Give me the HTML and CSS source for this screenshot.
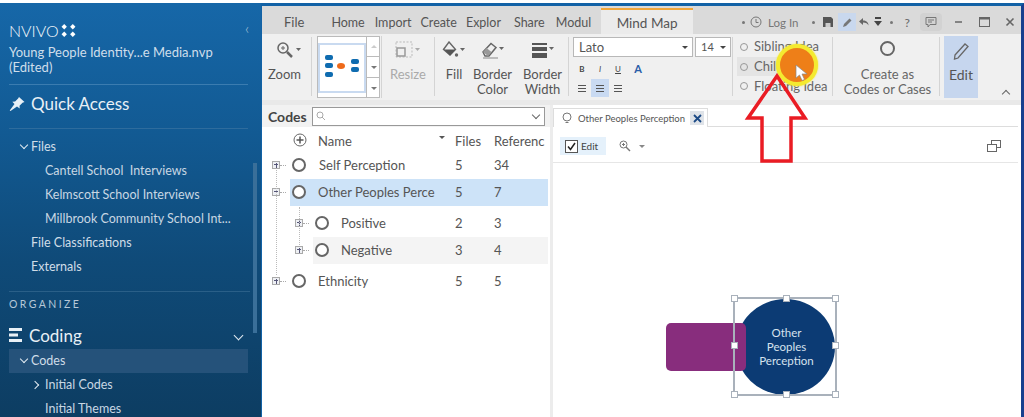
FILE: index.html
```html
<!DOCTYPE html>
<html lang="en">
<head>
<meta charset="utf-8">
<title>NVivo Mind Map</title>
<link rel="stylesheet" href="styles.css">
</head>
<body>
<div class="app">
  <aside class="sidebar">
    <div class="brand">NVIVO<svg class="brand-dots" width="15" height="13" viewBox="0 0 14 12"><g fill="#fff"><path d="M3 0l2.500 2.500L3 5 .5 2.500z"/><path d="M11 0l2.500 2.500L11 5 8.500 2.500z"/><path d="M3 7l2.500 2.500L3 12 .5 9.500z"/><path d="M11 7l2.500 2.500L11 12 8.500 9.500z"/></g></svg><span class="collapse">‹</span></div>
    <div class="project">Young People Identity...e Media.nvp<br>(Edited)</div>
    <div class="section-head quick">
      <svg width="16" height="14" viewBox="0 0 16 14"><path fill="#e8f0f6" d="M10 0l5.500 5-2 .8-3 3 .2 2.700L8 9.500 1.500 14l-.8-.6L5.500 7 3.300 4.700l2.800-.2 3-3z"/></svg>
      <span>Quick Access</span>
    </div>
    <ul class="nav files">
      <li class="l1"><i class="chev down"></i>Files</li>
      <li class="l2">Cantell School&nbsp; Interviews</li>
      <li class="l2">Kelmscott School Interviews</li>
      <li class="l2">Millbrook Community School Int...</li>
      <li class="l1">File Classifications</li>
      <li class="l1">Externals</li>
    </ul>
    <div class="organize">ORGANIZE</div>
    <div class="section-head coding">
      <svg width="14" height="14" viewBox="0 0 14 14"><g fill="#e8f0f6"><rect x="0" y="0" width="13" height="3"/><rect x="0" y="5.500" width="9" height="3"/><rect x="0" y="11" width="13" height="3"/></g></svg>
      <span>Coding</span>
      <i class="chev down end"></i>
    </div>
    <ul class="nav">
      <li class="l1 active"><i class="chev down"></i>Codes</li>
      <li class="l2"><i class="chev right"></i>Initial Codes</li>
      <li class="l2">Initial Themes</li>
    </ul>
    <div class="scrollbar"></div>
  </aside>

  <main class="window">
    <header class="titlebar">
      <nav class="tabs">
        <span class="tab file">File</span>
        <span class="tab home">Home</span>
        <span class="tab">Import</span>
        <span class="tab">Create</span>
        <span class="tab">Explor</span>
        <span class="tab share">Share</span>
        <span class="tab modul">Modul</span>
        <span class="tab current">Mind Map</span>
      </nav>
      <div class="quickbar">
        <span class="dot"></span>
        <svg class="qclock" width="12" height="12" viewBox="0 0 12 12"><circle cx="6" cy="6" r="5" fill="none" stroke="#777"/><path d="M6 3v3.500h2.500" fill="none" stroke="#777"/></svg>
        <span class="login">Log In</span>
        <span class="dot d2"></span>
        <svg class="qsave" width="10" height="10" viewBox="0 0 10 10"><path fill="#555" d="M0 0h8l2 2v8H0z"/><rect x="2.500" y="6" width="5" height="4" fill="#ccc"/></svg>
        <span class="qpen"><svg width="11" height="11" viewBox="0 0 11 11"><path d="M1 10l1-3 5.500-5.500 2 2L4 9z" fill="#777"/></svg></span>
        <svg class="qundo" width="12" height="10" viewBox="0 0 12 10"><path d="M5 1L1 4.500 5 8V5.500c3 0 4.500 1 5.500 3C10.500 5 8 3.500 5 3.500z" fill="#666"/></svg>
        <svg class="qmore" width="8" height="10" viewBox="0 0 8 10"><rect x="1" y="0" width="6" height="2" fill="#444"/><path d="M0 4h8L4 9z" fill="#444"/></svg>
        <span class="dot d3"></span>
        <span class="qhelp">?</span>
        <span class="qchat"><svg width="12" height="12" viewBox="0 0 12 12"><path d="M1 1.500h10v7H5L3 11V8.500H1z" fill="none" stroke="#777"/><path d="M3 4h6M3 6h4" stroke="#777"/></svg></span>
        <svg class="wmin" width="10" height="10" viewBox="0 0 10 10"><path d="M2 5h7" stroke="#666" stroke-width="1.500"/></svg>
        <svg class="wmax" width="11" height="10" viewBox="0 0 11 10"><rect x=".5" y=".5" width="10" height="9" fill="none" stroke="#666"/><path d="M0 1.500h11" stroke="#666" stroke-width="2"/></svg>
        <svg class="wclose" width="10" height="10" viewBox="0 0 10 10"><path d="M1.500 1.500l7 7M8.500 1.500l-7 7" stroke="#666" stroke-width="1.600"/></svg>
      </div>
    </header>

    <section class="ribbon">
      <div class="rgroup g-zoom">
        <svg class="ricon" width="26" height="20" viewBox="0 0 26 20"><circle cx="7" cy="7" r="5" fill="none" stroke="#666" stroke-width="1.500"/><path d="M5 7h4M7 5v4" stroke="#666"/><path d="M11 11l5 5" stroke="#666" stroke-width="2.500"/><path d="M20 7h5l-2.500 3z" fill="#666"/></svg>
        <span>Zoom</span>
      </div>
      <div class="rgroup g-gallery">
        <div class="gallery">
          <div class="thumb"><svg width="38" height="26" viewBox="0 0 38 26"><g fill="#0f6cb0"><rect x="0" y="0" width="8" height="5" rx="2"/><rect x="0" y="8" width="8" height="5" rx="2"/><rect x="0" y="17" width="8" height="5" rx="2"/><rect x="26" y="4" width="8" height="5" rx="2"/><rect x="26" y="12" width="8" height="5" rx="2"/></g><ellipse cx="16" cy="11" rx="4" ry="3" fill="#ee6a1a"/></svg></div>
          <div class="gscroll"><span class="up"></span><span class="mid"></span><span class="low"></span></div>
        </div>
      </div>
      <div class="rgroup g-resize muted">
        <svg class="ricon" width="26" height="20" viewBox="0 0 26 20"><rect x="1" y="1" width="16" height="15" fill="none" stroke="#bbb" stroke-dasharray="2 1.500"/><rect x="2" y="7" width="8" height="8" fill="none" stroke="#999" stroke-width="1.500"/><path d="M20 7h5l-2.500 3z" fill="#aaa"/></svg>
        <span>Resize</span>
      </div>
      <div class="rgroup g-fill">
        <svg class="ricon" width="24" height="20" viewBox="0 0 24 20"><path d="M7 1l6.500 7.500L8 14 1.500 8.500z" fill="none" stroke="#666" stroke-width="1.400"/><path d="M2 8.500h11.500L8 14.500z" fill="#555"/><circle cx="14.500" cy="14" r="1.700" fill="#666"/><path d="M18 7h5l-2.500 3z" fill="#666"/></svg>
        <span>Fill</span>
      </div>
      <div class="rgroup g-border">
        <svg class="ricon" width="24" height="20" viewBox="0 0 24 20"><path d="M2 11L10 2.500l5 4L8 15H4z" fill="none" stroke="#666" stroke-width="1.500"/><path d="M2 11l5 4 3.500-4-5-4z" fill="#999"/><path d="M2 17h15" stroke="#888"/><path d="M18 6h5l-2.500 3z" fill="#666"/></svg>
        <span>Border<br>Color</span>
      </div>
      <div class="rgroup g-width">
        <svg class="ricon" width="24" height="20" viewBox="0 0 24 20"><g fill="#555"><rect x="1" y="2" width="15" height="2"/><rect x="1" y="6" width="15" height="4"/><rect x="1" y="12" width="15" height="5"/></g><path d="M18 6h5l-2.500 3z" fill="#666"/></svg>
        <span>Border<br>Width</span>
      </div>
      <div class="rgroup g-font">
        <div class="fontrow">
          <div class="select fname">Lato<i class="caret"></i></div>
          <div class="select fsize">14<i class="caret"></i></div>
        </div>
        <div class="fmtrow">
          <b class="fmt">B</b><em class="fmt">I</em><u class="fmt">U</u><span class="fmt acolor">A</span>
        </div>
        <div class="fmtrow">
          <span class="fmt"><i class="al"></i></span><span class="fmt on"><i class="al"></i></span><span class="fmt"><i class="al"></i></span>
        </div>
      </div>
      <div class="rgroup g-ideas">
        <div class="idea"><i class="bulb"></i>Sibling Idea</div>
        <div class="idea hover"><i class="bulb"></i>Child Idea</div>
        <div class="idea"><i class="bulb"></i>Floating Idea</div>
      </div>
      <div class="rgroup g-create">
        <i class="ring big"></i>
        <span>Create as<br>Codes or Cases</span>
      </div>
      <div class="rgroup g-edit">
        <svg class="ricon" width="18" height="20" viewBox="0 0 18 20"><path d="M3 14L13 3l3 2.500L6 17l-3.500 1z" fill="none" stroke="#666" stroke-width="1.300"/></svg>
        <span>Edit</span>
      </div>
      <div class="rcollapse"></div>
    </section>

    <div class="panes">
      <section class="codes">
        <div class="codes-head">
          <strong>Codes</strong>
          <div class="search">
            <svg width="10" height="10" viewBox="0 0 10 10"><circle cx="4" cy="4" r="3" fill="none" stroke="#aaa"/><path d="M6 6l3 3" stroke="#aaa"/></svg>
            <i class="search-chev"></i>
          </div>
        </div>
        <div class="tree">
          <div class="row head"><span class="c-icon"><svg width="14" height="14" viewBox="0 0 14 14"><circle cx="7" cy="7" r="6" fill="none" stroke="#666"/><path d="M7 3.500v7M3.500 7h7" stroke="#555" stroke-width="1.500"/></svg></span><span class="c-name">Name</span><i class="sort"></i><span class="c-files">Files</span><span class="c-refs">Referenc</span></div>
          <div class="row r-self"><i class="box plus"></i><i class="stub"></i><i class="ring"></i><span class="c-name">Self Perception</span><span class="c-files">5</span><span class="c-refs">34</span></div>
          <div class="row r-other selected"><i class="box minus"></i><i class="stub"></i><i class="ring"></i><span class="c-name">Other Peoples Perce</span><span class="c-files">5</span><span class="c-refs">7</span></div>
          <div class="row child r-pos"><i class="box plus"></i><i class="stub"></i><i class="ring"></i><span class="c-name">Positive</span><span class="c-files">2</span><span class="c-refs">3</span></div>
          <div class="row child r-neg"><i class="box plus"></i><i class="stub"></i><i class="ring"></i><span class="c-name">Negative</span><span class="c-files">3</span><span class="c-refs">4</span></div>
          <div class="row r-eth"><i class="box plus"></i><i class="stub"></i><i class="ring"></i><span class="c-name">Ethnicity</span><span class="c-files">5</span><span class="c-refs">5</span></div>
          <i class="vline outer"></i>
          <i class="vline inner"></i>
        </div>
      </section>

      <section class="doc">
        <div class="doc-tabs">
          <div class="doc-tab">
            <svg width="12" height="12" viewBox="0 0 12 12"><circle cx="6" cy="5" r="4" fill="none" stroke="#777"/><path d="M4.500 10.500h3" stroke="#777"/></svg>
            <span>Other Peoples Perception</span>
            <i class="doc-close"><svg width="9" height="9" viewBox="0 0 9 9"><path d="M1 1l7 7M8 1L1 8" stroke="#1c4a86" stroke-width="1.800"/></svg></i>
          </div>
        </div>
        <div class="doc-tools">
          <div class="edit-toggle">
            <svg width="13" height="13" viewBox="0 0 13 13"><rect x=".5" y=".5" width="12" height="12" fill="#fff" stroke="#555"/><path d="M3 6.500l2.500 3L10 3" fill="none" stroke="#222" stroke-width="1.500"/></svg>
            <span>Edit</span>
          </div>
          <svg class="doc-zoom" width="12" height="12" viewBox="0 0 12 12"><circle cx="4.500" cy="4.500" r="3.500" fill="none" stroke="#777"/><path d="M3 4.500h3M4.500 3v3" stroke="#777"/><path d="M7 7l4 4" stroke="#777" stroke-width="1.500"/></svg>
          <i class="doc-caret"></i>
          <svg class="doc-restore" width="14" height="12" viewBox="0 0 14 12"><rect x="4.500" y=".5" width="9" height="7" fill="none" stroke="#666"/><rect x=".5" y="4.500" width="9" height="7" fill="#fff" stroke="#666"/></svg>
        </div>
        <div class="canvas">
          <div class="node-side"></div>
          <div class="node-main">Other<br>Peoples<br>Perception</div>
          <div class="selection">
            <i class="h tl"></i><i class="h tc"></i><i class="h tr"></i>
            <i class="h ml"></i><i class="h mr"></i>
            <i class="h bl"></i><i class="h bc"></i><i class="h br"></i>
          </div>
        </div>
      </section>
    </div>
  </main>
</div>

<div class="spot"></div>
<svg class="pointer" width="14" height="18" viewBox="0 0 14 18"><path d="M1 1v13l3.500-3 2.500 5.500 2.500-1L7 10h5z" fill="#fff" stroke="#888" stroke-width=".7"/></svg>
<svg class="callout" width="66" height="92" viewBox="0 0 66 92"><path d="M33 3L61 45H47V88H18V45H4z" fill="none" stroke="#ea1c24" stroke-width="3.500"/></svg>
</body>
</html>
```
FILE: styles.css
```css
* { box-sizing: border-box; }
html, body { margin: 0; height: 417px; overflow: hidden; background: #fff; }
body { font-family: Lato, "Open Sans", sans-serif; color: #555; padding-top: 3px; position: relative; }
i { display: block; font-style: normal; }
.app { display: flex; height: 414px; }

/* sidebar */
.sidebar {
  width: 261px; flex: none; position: relative; padding: 0 15px 0 9px;
  background: linear-gradient(#1667a8 0, #125a93 130px, #0f4a78 260px, #0d3d62 414px);
  color: #d5e2ee; font-size: 13px; overflow: hidden;
}
.brand { display: flex; align-items: center; height: 18px; margin-top: 18px; font-size: 16px; color: #f4f8fb; font-weight: 300; position: relative; }
.brand-dots { margin-left: 2px; }
.collapse { position: absolute; left: 236px; top: -3px; font-size: 16px; color: #a8c2d8; }
.project { margin-top: 6px; font-size: 13px; line-height: 15px; color: #cfdeeb; padding-bottom: 9px; border-bottom: 1px solid #3b7cb0; width: 239px; white-space: nowrap; }
.section-head { display: flex; align-items: center; gap: 6px; color: #e8f0f6; font-size: 17px; font-weight: 400; }
.quick { height: 44px; border-bottom: 1px solid #2e6c9d; width: 239px; padding-bottom: 6px; }
.coding { height: 28px; margin-top: 10px; width: 239px; }
.coding .end { margin-left: auto; margin-right: 6px; }
.nav { list-style: none; margin: 0; padding: 0; }
.nav li { height: 24px; line-height: 24px; font-size: 12.500px; font-weight: 700; color: #bfd0de; position: relative; white-space: nowrap; }
.files { padding-top: 6px; border-bottom: 1px solid #2a5f88; width: 241px; height: 163px; margin-bottom: 0; }
.nav .l1 { padding-left: 22px; font-weight: 400; color: #d0dde8; }
.nav .l2 { padding-left: 36px; font-weight: 400; color: #c8d7e3; }
.nav .active { background: #25527a; width: 239px; }
.chev { position: absolute; width: 6px; height: 6px; border-right: 1.500px solid #e2ebf2; border-bottom: 1.500px solid #e2ebf2; }
.chev.down { transform: rotate(45deg); left: 12px; top: 7px; }
.chev.right { transform: rotate(-45deg); left: 23px; top: 9px; }
.coding .chev { position: static; width: 7px; height: 7px; }
.organize { font-size: 10.500px; letter-spacing: 2.400px; color: #b6c8d8; margin-top: 5px; height: 14px; line-height: 14px; font-weight: 400; }
.scrollbar { position: absolute; left: 253px; top: 160px; width: 4px; height: 170px; background: #3a6f99; }

/* window */
.window { flex: 1; min-width: 0; display: flex; flex-direction: column; background: #e9e9e9; border-top: 3px solid #1262a6; border-left: 1px solid #1262a6; border-right: 3px solid #173f8e; }
.titlebar { height: 28px; flex: none; background: #dadada; display: flex; padding-top: 2px; font-size: 12.500px; color: #555; }
.tabs { display: flex; align-items: stretch; width: 431px; padding-left: 7px; }
.tab { line-height: 29px; padding: 0 4px; margin-right: 1px; white-space: nowrap; }
.tab.file { padding: 0 15px; margin-right: 8px; font-size: 13px; }
.tab.home { padding-right: 5px; }
.tab.share { margin-left: 4px; }
.tab.modul { margin-left: 2px; }
.tab.current { background: #ebebeb; border-top: 2px solid #f0a63c; width: 93px; margin: 0 0 0 5px; padding: 0; text-align: center; line-height: 26px; font-size: 13.500px; }
.quickbar { display: flex; align-items: center; flex: 1; padding-left: 49px; font-size: 11.500px; color: #777; padding-top: 2px; white-space: nowrap; }
.dot { width: 3px; height: 3px; border-radius: 50%; background: #777; flex: none; }
.qclock { margin-left: 5px; flex: none; }
.login { margin-left: 6px; }
.d2 { margin-left: 14px; }
.qsave { margin-left: 8px; flex: none; }
.qpen { width: 18px; height: 18px; background: #c9d8ee; display: flex; align-items: center; justify-content: center; margin-left: 5px; flex: none; }
.qundo { margin-left: 2px; flex: none; }
.qmore { margin-left: 4px; flex: none; }
.d3 { margin-left: 8px; }
.qhelp { margin-left: 11px; font-size: 12px; color: #666; }
.qchat { margin-left: 10px; width: 22px; height: 18px; border-radius: 4px; background: #d2d2d2; display: flex; align-items: center; justify-content: center; flex: none; }
.wmin { margin-left: 11px; flex: none; }
.wmax { margin-left: 16px; flex: none; }
.wclose { margin-left: 15px; flex: none; }

/* ribbon */
.ribbon { height: 66px; flex: none; background: #f0f0f0; display: flex; font-size: 13px; color: #555; position: relative; }
.rgroup { display: flex; flex-direction: column; align-items: center; text-align: center; line-height: 15px; border-right: 1px solid #d4d4d4; margin: 3px 0 4px; flex: none; }
.ricon { margin-top: 4px; margin-bottom: 6px; flex: none; }
.g-zoom { width: 50px; padding-right: 4px; }
.g-zoom .ricon { margin-left: 8px; }
.g-gallery { width: 70px; padding-left: 4px; margin-top: 2px; margin-bottom: 2px; }
.gallery { display: flex; width: 63px; height: 63px; border: 1px solid #bbb; background: #fff; }
.thumb { width: 48px; height: 50px; margin-top: 6px; background: #fff; border: 2px solid #c9daf0; padding: 10px 0 0 4px; }
.gscroll { display: flex; flex-direction: column; flex: 1; }
.gscroll span { flex: 1; border-left: 1px solid #bbb; position: relative; }
.gscroll .mid { border-top: 1px solid #bbb; border-bottom: 1px solid #bbb; }
.gscroll span::after { content: ""; position: absolute; left: 4px; top: 9px; border: 3px solid transparent; border-top-color: #777; }
.gscroll .up::after { border-top-color: transparent; border-bottom-color: #ccc; top: 5px; }
.g-resize { width: 53px; color: #aaa; }
.g-fill { width: 38px; border-right: 0; }
.g-border { width: 38px; border-right: 0; padding-left: 1px; }
.g-width { width: 58px; padding-left: 6px; }
.g-font { width: 164px; padding: 0 0 0 4px; align-items: flex-start; }
.fontrow { display: flex; gap: 2px; margin-bottom: 3px; }
.select { height: 20px; background: #fff; border: 1px solid #b8b8b8; position: relative; text-align: left; padding-left: 5px; line-height: 18px; font-size: 13px; color: #555; }
.fname { width: 120px; }
.fsize { width: 36px; font-size: 11px; }
.caret { position: absolute; right: 4px; top: 8px; border: 3px solid transparent; border-top-color: #444; }
.fmtrow { display: flex; height: 18px; font-size: 8px; color: #444; line-height: 18px; }
.fmtrow + .fmtrow { margin-top: 1px; }
.fmt { width: 18px; height: 18px; text-align: center; }
.fmt.on { background: #c9daf2; }
.acolor { color: #2a5da8; font-weight: 700; font-size: 11px; margin-left: 2px; }
.al { display: block; width: 8px; height: 7px; background: repeating-linear-gradient(#555 0 1.500px, transparent 1.500px 3px); margin: 6px auto 0; }
.g-ideas { width: 100px; padding: 0 0 0 4px; align-items: flex-start; font-size: 13px; }
.idea { display: flex; align-items: center; gap: 6px; height: 21.500px; width: 92px; white-space: nowrap; color: #666; padding-left: 3px; }
.idea.hover { background: #e4e4e4; width: 60px; }
.bulb { width: 8px; height: 8px; border-radius: 50%; border: 1px solid #999; flex: none; }
.g-create { width: 107px; padding-left: 3px; color: #666; }
.ring { width: 14px; height: 14px; border-radius: 50%; border: 2px solid #666; flex: none; background: #fff; }
.ring.big { width: 15px; height: 15px; background: transparent; margin: 4px 0 11px; }
.g-edit { width: 34px; margin: 2px 0 2px 4px; background: #c6d6ee; border-right: 0; color: #555; }
.g-edit .ricon { margin-bottom: 6px; margin-top: 5px; }
.g-edit span { font-size: 14px; }
.rcollapse { position: absolute; left: 741px; bottom: 3px; width: 6px; height: 6px; border-left: 1.500px solid #666; border-top: 1.500px solid #666; transform: rotate(45deg); }

/* panes */
.panes { flex: 1; display: flex; min-height: 0; margin-top: 5px; gap: 3px; background: #ececec; }
.codes { width: 288px; flex: none; background: #fff; }
.codes-head { height: 22px; display: flex; align-items: center; background: #f2f2f2; padding: 0 5px 0 6px; gap: 5px; }
.codes-head strong { font-size: 14px; font-weight: 700; color: #444; }
.search { flex: 1; height: 19px; border: 1px solid #999; background: #fff; display: flex; align-items: center; padding: 0 5px 0 3px; justify-content: space-between; }
.search-chev { width: 6px; height: 6px; border-right: 1.200px solid #666; border-bottom: 1.200px solid #666; transform: rotate(45deg); margin-top: -3px; }
.tree { position: relative; font-size: 13px; color: #555; }
.row { display: flex; align-items: center; height: 26px; position: relative; }
.row span { margin-top: -1px; }
.row .box { position: absolute; left: 10px; top: 50%; margin-top: -5px; }
.row .stub { position: absolute; left: 18px; top: 50%; width: 6px; margin-top: -1px; border-top: 1px dotted #aaa; }
.row .ring { position: absolute; left: 30px; top: 50%; margin-top: -8px; }
.head span, .r-eth span { margin-top: 0; }
.r-eth .box { margin-top: -4px; }
.r-eth .stub { margin-top: 0; }
.r-eth .ring { margin-top: -7px; }
.box { width: 8px; height: 8px; border: 1px solid #aaa; background: #eef0f4; }
.box::after { content: ""; display: block; margin: 2px 1px 0; height: 0; border-top: 1px solid #557; }
.box.plus::before { content: ""; position: absolute; left: 3px; top: 1px; height: 5px; border-left: 1px solid #557; }
.c-icon { position: absolute; left: 31px; top: 6px; }
.c-name { position: absolute; left: 57px; white-space: nowrap; }
.c-files { position: absolute; left: 193px; }
.c-refs { position: absolute; left: 232px; white-space: nowrap; }
.head { height: 27px; }
.head .c-name { left: 56px; }
.head .c-files { left: 193px; }
.sort { position: absolute; left: 177px; top: 9px; border: 3.500px solid transparent; border-top-color: #555; }
.r-self { height: 23px; margin-bottom: 2px; }
.r-other { height: 27px; margin-left: 28px; width: 258px; background: #cde3f8; }
.r-other .box { left: -18px; }
.r-other .stub { left: -10px; }
.r-other .ring { left: 2px; }
.r-other .c-name { left: 28px; }
.r-other .c-files { left: 165px; }
.r-other .c-refs { left: 204px; }
.child { height: 27px; margin-left: 51px; width: 235px; }
.r-pos { margin-top: 4px; }
.r-neg { background: #f4f4f4; }
.child .box { left: -18px; }
.child .stub { left: -10px; }
.child .ring { left: 2px; }
.child .c-name { left: 28px; }
.child .c-files { left: 142px; }
.child .c-refs { left: 181px; }
.r-eth { height: 26px; margin-top: 4px; }
.r-eth .c-name { left: 56px; }
.vline { position: absolute; border-left: 1px dotted #bbb; width: 0; }
.vline.outer { left: 14px; top: 43px; height: 105px; }
.vline.inner { left: 37px; top: 80px; height: 38px; }

/* document */
.doc { flex: 1; min-width: 0; background: #fff; display: flex; flex-direction: column; }
.doc-tabs { height: 22px; flex: none; border-bottom: 1px solid #ddd; padding: 3px 0 0 0; background: #fff; margin-right: 3px; }
.doc-tab { width: 155px; height: 19px; border: 1px solid #ddd; border-bottom: 0; display: flex; align-items: center; padding-left: 7px; font-size: 9.500px; color: #555; background: #fff; }
.doc-tab span { margin-left: 5px; white-space: nowrap; width: 107px; }
.doc-close { width: 14px; height: 14px; margin-left: 5px; background: #dfe3e8; display: flex; align-items: center; justify-content: center; }
.doc-tools { height: 36px; flex: none; border-bottom: 1px solid #e6e6e6; display: flex; align-items: center; padding: 3px 0 0 7px; font-size: 10px; color: #444; margin-right: 3px; }
.edit-toggle { width: 46px; height: 18px; background: #e5f1fb; display: flex; align-items: center; gap: 3px; padding-left: 5px; }
.doc-zoom { margin-left: 13px; }
.doc-caret { margin: 3px 0 0 8px; border: 3px solid transparent; border-top-color: #888; }
.doc-restore { margin-left: auto; margin-right: 17px; }
.canvas { flex: 1; position: relative; background: #fff; }
.node-side { position: absolute; left: 113px; top: 160px; width: 80px; height: 48px; border-radius: 5px; background: #882d7d; z-index: 2; }
.node-main { position: absolute; left: 183px; top: 136px; width: 99px; height: 96px; border-radius: 50%; background: #0c3b74; color: #d6e2ee; font-size: 11.500px; line-height: 14px; display: flex; align-items: center; justify-content: center; text-align: center; padding: 0 0 0 2px; }
.selection { position: absolute; left: 180px; top: 134px; width: 104px; height: 99px; border: 2px solid #a9b1bb; z-index: 3; }
.h { position: absolute; width: 7px; height: 7px; background: #fff; border: 1px solid #a9b1bb; }
.tl { left: -4px; top: -4px; } .tc { left: 48px; top: -4px; } .tr { right: -4px; top: -4px; }
.ml { left: -4px; top: 43px; } .mr { right: -4px; top: 43px; }
.bl { left: -4px; bottom: -4px; } .bc { left: 48px; bottom: -4px; } .br { right: -4px; bottom: -4px; }

/* annotation overlay */
.spot { position: absolute; left: 776px; top: 44px; width: 42px; height: 42px; border-radius: 50%; background: #ee7f18; border: 4px solid #f4ea30; box-shadow: 0 0 2px #f4ea30; }
.pointer { position: absolute; left: 795px; top: 64px; }
.callout { position: absolute; left: 744px; top: 73px; }
```
